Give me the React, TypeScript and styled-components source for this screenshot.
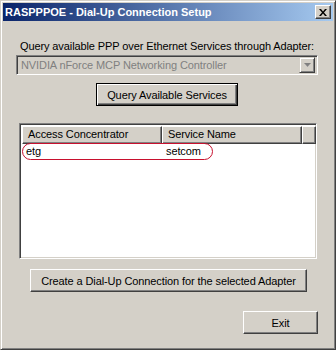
import React from "react";
import styled, { createGlobalStyle } from "styled-components";

const Global = createGlobalStyle`
  html, body { margin: 0; padding: 0; background: #D4D0C8; }
  * { box-sizing: border-box; }
`;

const Window = styled.div`
  width: 336px;
  height: 350px;
  background: #d4d0c8;
  border: 1px solid;
  border-color: #d4d0c8 #404040 #404040 #d4d0c8;
  box-shadow: inset 1px 1px #ffffff, inset -1px -1px #808080;
  padding: 2px;
  display: flex;
  flex-direction: column;
  font-family: "Liberation Sans", Arial, sans-serif;
  font-size: 11px;
  letter-spacing: -0.1px;
  color: #000;
`;

const TitleBar = styled.div`
  height: 18px;
  flex: none;
  display: flex;
  align-items: center;
  justify-content: space-between;
  padding: 0 2px 0 2px;
  background: linear-gradient(to right, #0a246a, #a6caf0);
`;

const Title = styled.span`
  color: #fff;
  font-weight: bold;
  font-size: 11px;
  letter-spacing: 0px;
`;

const CloseBtn = styled.div`
  width: 16px;
  height: 14px;
  background: #d4d0c8;
  border: 1px solid;
  border-color: #ffffff #404040 #404040 #ffffff;
  box-shadow: inset -1px -1px #808080;
  display: flex;
  align-items: center;
  justify-content: center;
`;

const Body = styled.div`
  display: flex;
  flex-direction: column;
  align-items: flex-start;
  padding-left: 13px;
`;

const Label = styled.div`
  margin-top: 19px;
  height: 13px;
  line-height: 13px;
  width: 302px;
  text-align: center;
`;

const Combo = styled.div`
  margin-top: 2px;
  width: 302px;
  height: 20px;
  border: 1px solid;
  border-color: #808080 #ffffff #ffffff #808080;
  box-shadow: inset 1px 1px #404040, inset -1px -1px #d4d0c8;
  padding: 2px;
  display: flex;
  align-items: center;
  justify-content: space-between;
`;

const ComboText = styled.span`
  color: #808080;
  padding-left: 2px;
`;

const DropBtn = styled.div`
  width: 16px;
  height: 16px;
  border: 1px solid;
  border-color: #d4d0c8 #404040 #404040 #d4d0c8;
  box-shadow: inset 1px 1px #ffffff, inset -1px -1px #808080;
  display: flex;
  align-items: center;
  justify-content: center;
`;

const Button = styled.div<{ $w: number; $ml: number; $mt: number; $default?: boolean }>`
  margin-top: ${(p) => p.$mt}px;
  margin-left: ${(p) => p.$ml}px;
  width: ${(p) => p.$w}px;
  height: 23px;
  display: flex;
  align-items: center;
  justify-content: center;
  background: #d4d0c8;
  border: 1px solid;
  border-color: ${(p) => (p.$default ? "#000000" : "#ffffff #404040 #404040 #ffffff")};
  box-shadow: ${(p) =>
    p.$default
      ? "inset 1px 1px #ffffff, inset -1px -1px #404040, inset -2px -2px #808080"
      : "inset -1px -1px #808080"};
`;

const List = styled.div`
  position: relative;
  margin-top: 17px;
  margin-left: 3px;
  width: 298px;
  height: 136px;
  background: #fff;
  border: 1px solid;
  border-color: #808080 #ffffff #ffffff #808080;
  box-shadow: inset 1px 1px #404040, inset -1px -1px #d4d0c8;
  padding: 2px;
  display: flex;
  flex-direction: column;
`;

const Header = styled.div`
  display: flex;
  height: 18px;
  flex: none;
`;

const HeaderCell = styled.div<{ $w: number }>`
  width: ${(p) => p.$w}px;
  flex: none;
  height: 18px;
  background: #d4d0c8;
  border: 1px solid;
  border-color: #ffffff #404040 #404040 #ffffff;
  box-shadow: inset -1px -1px #808080;
  padding-left: 5px;
  line-height: 15px;
  white-space: nowrap;
  overflow: hidden;
`;

const Row = styled.div`
  display: flex;
  height: 14px;
  line-height: 14px;
  margin-top: 0px;
`;

const Cell = styled.div<{ $w: number }>`
  width: ${(p) => p.$w}px;
  padding-left: 4px;
  flex: none;
`;

const Highlight = styled.div`
  position: absolute;
  left: 2px;
  top: 19px;
  width: 191px;
  height: 17px;
  border: 1px solid #c8102e;
  border-radius: 9px;
  pointer-events: none;
`;

export default function App() {
  return (
    <>
      <Global />
      <Window>
        <TitleBar>
          <Title>RASPPPOE - Dial-Up Connection Setup</Title>
          <CloseBtn>
            <svg width="8" height="7" viewBox="0 0 8 7">
              <path d="M0 0h2l2 2.5L6 0h2L5 3.5 8 7H6L4 4.5 2 7H0l3-3.5z" fill="#000" />
            </svg>
          </CloseBtn>
        </TitleBar>
        <Body>
          <Label>Query available PPP over Ethernet Services through Adapter:</Label>
          <Combo>
            <ComboText>NVIDIA nForce MCP Networking Controller</ComboText>
            <DropBtn>
              <svg width="7" height="5" viewBox="0 0 7 5">
                <path d="M1 1h5L3.5 4z" fill="#ffffff" />
                <path d="M0 0h7L3.5 4z" fill="#808080" />
              </svg>
            </DropBtn>
          </Combo>
          <Button $w={142} $ml={80} $mt={8} $default>
            Query Available Services
          </Button>
          <List>
            <Header>
              <HeaderCell $w={140}>Access Concentrator</HeaderCell>
              <HeaderCell $w={140}>Service Name</HeaderCell>
              <HeaderCell $w={14} />
            </Header>
            <Row>
              <Cell $w={140}>etg</Cell>
              <Cell $w={140}>setcom</Cell>
            </Row>
            <Highlight />
          </List>
          <Button $w={277} $ml={14} $mt={10}>
            Create a Dial-Up Connection for the selected Adapter
          </Button>
          <Button $w={75} $ml={227} $mt={19}>
            Exit
          </Button>
        </Body>
      </Window>
    </>
  );
}
